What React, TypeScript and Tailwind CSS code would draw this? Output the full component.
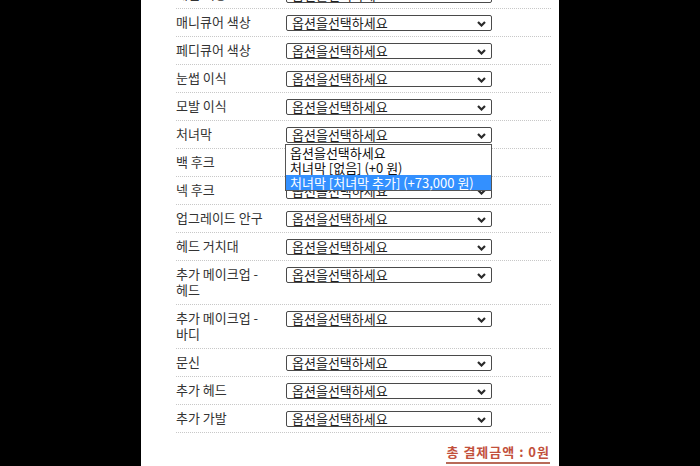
import React, { useState } from "react";

type OptionRow = {
  label: string;
  options: string[];
};

const PLACEHOLDER = "옵션을선택하세요";

const rows: OptionRow[] = [
  { label: "네일 색상", options: [] },
  { label: "매니큐어 색상", options: [] },
  { label: "페디큐어 색상", options: [] },
  { label: "눈썹 이식", options: [] },
  { label: "모발 이식", options: [] },
  { label: "처녀막", options: ["처녀막 [없음] (+0 원)", "처녀막 [처녀막 추가] (+73,000 원)"] },
  { label: "백 후크", options: [] },
  { label: "넥 후크", options: [] },
  { label: "업그레이드 안구", options: [] },
  { label: "헤드 거치대", options: [] },
  { label: "추가 메이크업 - 헤드", options: [] },
  { label: "추가 메이크업 - 바디", options: [] },
  { label: "문신", options: [] },
  { label: "추가 헤드", options: [] },
  { label: "추가 가발", options: [] },
];

const Chevron = () => (
  <svg width="9" height="6" viewBox="0 0 9 6" className="absolute right-[5px] top-[5px]">
    <path d="M1 1 L4.5 4.5 L8 1" fill="none" stroke="#2a2a2a" strokeWidth="2.2" />
  </svg>
);

const OptionSelect = ({
  options,
  open,
  hovered,
  onToggle,
}: {
  options: string[];
  open: boolean;
  hovered: number;
  onToggle: () => void;
}) => {
  const items = [PLACEHOLDER, ...options];
  return (
    <div className="relative w-[206px] shrink-0">
      <button
        type="button"
        onClick={onToggle}
        className="relative block h-[16px] w-full rounded-[2px] border border-[#4a4a4a] bg-white pl-[5px] text-left text-[13px] leading-[14px] text-[#222]"
      >
        {PLACEHOLDER}
        <Chevron />
      </button>

      {/* open option list */}
      {open && (
        <ul className="absolute left-[-1px] right-0 top-full z-10 mt-[1px] border border-[#555] bg-white">
          {items.map((item, i) => (
            <li
              key={item}
              className={`h-[15px] px-[4px] text-[13px] leading-[15px] whitespace-nowrap ${
                i === hovered ? "bg-[#3390ff] text-white" : "text-[#111]"
              }`}
            >
              {item}
            </li>
          ))}
        </ul>
      )}
    </div>
  );
};

export default function App() {
  const [openRow, setOpenRow] = useState<string | null>("처녀막");

  return (
    <div
      className="h-[466px] overflow-hidden bg-black"
      style={{ fontFamily: '"Noto Sans CJK KR", "Noto Sans", sans-serif' }}
    >
      <div className="mx-auto flex h-full w-[418px] flex-col bg-white pl-[35px] pr-[8px]">
        <div className="-mt-[19px]">
          {rows.map((row) => (
            <div
              key={row.label}
              className="flex items-start border-b border-dotted border-[#c8c8c8] pt-[6px] pb-[5px]"
            >
              <div className="relative -top-px w-[110px] pr-[4px] text-[13px] leading-[16px] break-keep text-[#333]">
                {row.label}
              </div>
              <OptionSelect
                options={row.options}
                open={openRow === row.label}
                hovered={2}
                onToggle={() => setOpenRow(openRow === row.label ? null : row.label)}
              />
            </div>
          ))}
        </div>

        <div className="mt-[11px] flex justify-end pr-[1px]">
          <span className="border-b-2 border-[#b86a58] pb-[2px] text-[13px] font-bold leading-[16px] tracking-[1px] text-[#c2503c]">
            총 결제금액 : 0원
          </span>
        </div>
      </div>
    </div>
  );
}
